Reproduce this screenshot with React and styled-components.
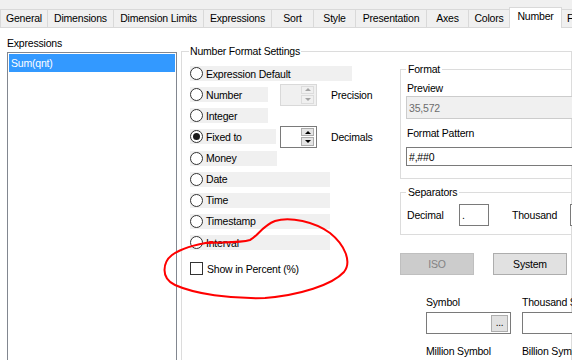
import styled, { createGlobalStyle } from "styled-components";

const GlobalStyle = createGlobalStyle`
  body {
    margin: 0;
    background: #fff;
  }
  * {
    box-sizing: border-box;
  }
`;

const Window = styled.div`
  position: relative;
  width: 572px;
  height: 360px;
  overflow: hidden;
  background: #fff;
  font-family: "Liberation Sans", Arial, sans-serif;
  font-size: 10.5px;
  letter-spacing: -0.2px;
  color: #000;
`;

const TabStrip = styled.div`
  display: flex;
  align-items: flex-end;
  height: 28px;
  background: #f0f0f0;
  border-bottom: 1px solid #d9d9d9;
`;

const Tab = styled.div`
  flex: none;
  position: relative;
  width: ${(p) => p.$w}px;
  height: ${(p) => (p.$active ? 21 : 18)}px;
  margin-left: -1px;
  margin-bottom: ${(p) => (p.$active ? -1 : 0)}px;
  padding-top: 1px;
  line-height: 15px;
  text-align: center;
  white-space: nowrap;
  background: ${(p) => (p.$active ? "#fff" : "#f0f0f0")};
  border: 1px solid #d9d9d9;
  border-bottom: none;
  z-index: ${(p) => (p.$active ? 1 : 0)};

  &:first-child {
    margin-left: 0;
  }
`;

const Body = styled.div`
  display: flex;
`;

const LeftPane = styled.div`
  flex: none;
  width: 181px;
  padding: 8px 0 0 7px;
`;

const Caption = styled.div`
  line-height: 14px;
  white-space: nowrap;
`;

const ListBox = styled.div`
  margin-top: 2px;
  width: 170px;
  height: 400px;
  padding: 1px;
  border: 1px solid #828790;
`;

const ListItem = styled.div`
  height: 18px;
  line-height: 18px;
  padding-left: 2px;
  background: ${(p) => (p.$selected ? "#3399ff" : "transparent")};
  color: ${(p) => (p.$selected ? "#fff" : "#000")};
`;

const Group = styled.fieldset`
  margin: 0;
  min-width: 0;
  border: 1px solid #dcdcdc;
  padding: ${(p) => p.$pad};
  width: ${(p) => (p.$w ? `${p.$w}px` : "auto")};
`;

const Legend = styled.legend`
  margin-left: -1px;
  padding: 0 ${(p) => p.$px || 2}px;
  line-height: 14px;
  white-space: nowrap;
`;

const SettingsGroup = styled(Group)`
  margin-top: 16px;
  height: 400px;
`;

const SettingsGrid = styled.div`
  display: flex;
`;

const RadioColumn = styled.div`
  flex: none;
  width: 210px;
  padding-top: 4px;
  display: flex;
  flex-direction: column;
  gap: 6.125px;
`;

const OptionRow = styled.div`
  display: flex;
  align-items: center;
  height: 15px;
`;

const OptionCell = styled.div`
  flex: none;
  width: 90px;
`;

const OptionBack = styled.label`
  display: flex;
  align-items: center;
  gap: 3px;
  width: ${(p) => p.$w}px;
  height: 15px;
  background: #f0f0f0;
  white-space: nowrap;
`;

const Radio = styled.span`
  flex: none;
  display: flex;
  align-items: center;
  justify-content: center;
  width: 13px;
  height: 13px;
  border: 1px solid #333;
  border-radius: 50%;
  background: #fff;

  &::after {
    content: "";
    display: ${(p) => (p.$checked ? "block" : "none")};
    width: 7px;
    height: 7px;
    border-radius: 50%;
    background: #1b1b1b;
  }
`;

const Spin = styled.div`
  flex: none;
  display: flex;
  justify-content: flex-end;
  width: 37px;
  height: 22px;
  padding: 1px 2px 1px 0;
  border: 1px solid ${(p) => (p.$disabled ? "#d9d9d9" : "#7a7a7a")};
  background: ${(p) => (p.$disabled ? "#f0f0f0" : "#fff")};
`;

const SpinButtons = styled.div`
  display: flex;
  flex-direction: column;
  gap: 1px;
  width: 13px;
`;

const SpinButton = styled.div`
  flex: 1;
  display: flex;
  align-items: center;
  justify-content: center;
  border: 1px solid ${(p) => (p.$disabled ? "#dcdcdc" : "#acacac")};
  background: ${(p) => (p.$disabled ? "#f0f0f0" : "#e5e5e5")};
`;

const Arrow = styled.span`
  width: 0;
  height: 0;
  border-left: 3px solid transparent;
  border-right: 3px solid transparent;
  ${(p) => (p.$down ? "border-top" : "border-bottom")}: 3px solid
    ${(p) => (p.$disabled ? "#a3a3a3" : "#000")};
`;

const SpinLabel = styled.span`
  margin-left: 14px;
  line-height: 14px;
  white-space: nowrap;
`;

const CheckRow = styled.label`
  display: flex;
  align-items: center;
  gap: 4px;
  height: 13px;
  margin-top: 6px;
  white-space: nowrap;
`;

const CheckBox = styled.span`
  flex: none;
  width: 13px;
  height: 13px;
  border: 1px solid #333;
  background: #fff;
`;

const RightColumn = styled.div`
  flex: none;
  width: 240px;
`;

const FieldLabel = styled.div`
  margin-top: ${(p) => p.$mt || 0}px;
  line-height: 14px;
  white-space: nowrap;
`;

const TextBox = styled.div`
  display: flex;
  align-items: center;
  margin-top: ${(p) => p.$mt || 0}px;
  margin-left: ${(p) => p.$ml || 0}px;
  width: ${(p) => (p.$w ? `${p.$w}px` : "auto")};
  height: ${(p) => p.$h || 22}px;
  padding: 0 2px;
  border: 1px solid ${(p) => (p.$disabled ? "#cccccc" : "#7a7a7a")};
  background: ${(p) => (p.$disabled ? "#f0f0f0" : "#fff")};
  color: ${(p) => (p.$disabled ? "#6d6d6d" : "#000")};
  white-space: nowrap;
`;

const SeparatorsGroup = styled(Group)`
  margin-top: 6px;
`;

const SeparatorRow = styled.div`
  display: flex;
  align-items: center;
  margin-top: 5px;
  height: 22px;
`;

const InlineLabel = styled.span`
  flex: none;
  width: ${(p) => p.$w}px;
  margin-left: ${(p) => p.$ml || 0}px;
  line-height: 14px;
  white-space: nowrap;
`;

const ButtonRow = styled.div`
  display: flex;
  gap: 19px;
  margin-top: 18px;
`;

const Button = styled.div`
  width: 74px;
  height: 22px;
  line-height: 20px;
  text-align: center;
  border: 1px solid ${(p) => (p.$disabled ? "#bfbfbf" : "#adadad")};
  background: ${(p) => (p.$disabled ? "#cccccc" : "#e1e1e1")};
  color: ${(p) => (p.$disabled ? "#838383" : "#000")};
`;

const SymbolGrid = styled.div`
  display: grid;
  grid-template-columns: 85px 120px;
  column-gap: 11px;
  margin: 20px 0 0 26px;
`;

const SymbolCell = styled.div`
  display: flex;
  flex-direction: column;
`;

const BrowseInput = styled(TextBox)`
  justify-content: flex-end;
`;

const BrowseButton = styled.div`
  width: 17px;
  height: 17px;
  line-height: 13px;
  text-align: center;
  border: 1px solid #adadad;
  background: #e1e1e1;
  font-size: 10px;
`;

const Annotation = styled.svg`
  position: absolute;
  left: 0;
  top: 0;
  pointer-events: none;
`;

const tabs = [
  { label: "General", w: 48 },
  { label: "Dimensions", w: 67 },
  { label: "Dimension Limits", w: 91 },
  { label: "Expressions", w: 69 },
  { label: "Sort", w: 43 },
  { label: "Style", w: 43 },
  { label: "Presentation", w: 72 },
  { label: "Axes", w: 43 },
  { label: "Colors", w: 42 },
  { label: "Number", w: 53, active: true },
  { label: "Font", w: 32 },
];

const options = [
  { label: "Expression Default", w: 162 },
  { label: "Number", w: 78, spin: "Precision", disabled: true },
  { label: "Integer", w: 78 },
  { label: "Fixed to", w: 86, checked: true, spin: "Decimals" },
  { label: "Money", w: 87 },
  { label: "Date", w: 140 },
  { label: "Time", w: 140 },
  { label: "Timestamp", w: 140 },
  { label: "Interval", w: 140 },
];

function SpinBox({ disabled }) {
  return (
    <Spin $disabled={disabled}>
      <SpinButtons>
        <SpinButton $disabled={disabled}>
          <Arrow $disabled={disabled} />
        </SpinButton>
        <SpinButton $disabled={disabled}>
          <Arrow $down $disabled={disabled} />
        </SpinButton>
      </SpinButtons>
    </Spin>
  );
}

export default function App() {
  return (
    <Window>
      <GlobalStyle />
      <TabStrip>
        {tabs.map((t) => (
          <Tab key={t.label} $w={t.w} $active={t.active}>
            {t.label}
          </Tab>
        ))}
      </TabStrip>
      <Body>
        <LeftPane>
          <Caption>Expressions</Caption>
          <ListBox>
            <ListItem $selected>Sum(qnt)</ListItem>
          </ListBox>
        </LeftPane>

        <SettingsGroup $w={460} $pad="4px 0 0 8px">
          <Legend $px={1}>Number Format Settings</Legend>
          <SettingsGrid>
            <RadioColumn>
              {options.map((o) => (
                <OptionRow key={o.label}>
                  <OptionCell>
                    <OptionBack $w={o.w}>
                      <Radio $checked={o.checked} />
                      {o.label}
                    </OptionBack>
                  </OptionCell>
                  {o.spin && (
                    <>
                      <SpinBox disabled={o.disabled} />
                      <SpinLabel>{o.spin}</SpinLabel>
                    </>
                  )}
                </OptionRow>
              ))}
              <CheckRow>
                <CheckBox />
                Show in Percent (%)
              </CheckRow>
            </RadioColumn>

            <RightColumn>
              <Group $pad="0 6px 12px 6px">
                <Legend>Format</Legend>
                <FieldLabel $mt={5}>Preview</FieldLabel>
                <TextBox $mt={1} $ml={-1} $h={23} $disabled>
                  35,572
                </TextBox>
                <FieldLabel $mt={7}>Format Pattern</FieldLabel>
                <TextBox $mt={7} $ml={-1} $h={19}>
                  #,##0
                </TextBox>
              </Group>

              <SeparatorsGroup $pad="0 6px 8px 6px">
                <Legend>Separators</Legend>
                <SeparatorRow>
                  <InlineLabel $w={52}>Decimal</InlineLabel>
                  <TextBox $w={30}>.</TextBox>
                  <InlineLabel $w={58} $ml={23}>
                    Thousand
                  </InlineLabel>
                  <TextBox $w={30}>,</TextBox>
                </SeparatorRow>
              </SeparatorsGroup>

              <ButtonRow>
                <Button $disabled>ISO</Button>
                <Button>System</Button>
              </ButtonRow>

              <SymbolGrid>
                <SymbolCell>
                  <FieldLabel>Symbol</FieldLabel>
                  <BrowseInput $mt={3}>
                    <BrowseButton>...</BrowseButton>
                  </BrowseInput>
                  <FieldLabel $mt={10}>Million Symbol</FieldLabel>
                </SymbolCell>
                <SymbolCell>
                  <FieldLabel>Thousand Symbol</FieldLabel>
                  <TextBox $mt={3} />
                  <FieldLabel $mt={10}>Billion Symbol</FieldLabel>
                </SymbolCell>
              </SymbolGrid>
            </RightColumn>
          </SettingsGrid>
        </SettingsGroup>
      </Body>

      <Annotation width="572" height="360" viewBox="0 0 572 360">
        <path
          d="M206 243 C225 242 240 243 250 240 C258 236 262 226 275 221 C290 216 315 222 330 233 C345 245 352 262 344 272 C332 285 300 295 265 298 C230 299 195 294 175 285 C160 278 163 262 172 255 C182 248 198 244 212 242"
          fill="none"
          stroke="#f00"
          strokeWidth="2"
          strokeLinecap="round"
        />
      </Annotation>
    </Window>
  );
}
